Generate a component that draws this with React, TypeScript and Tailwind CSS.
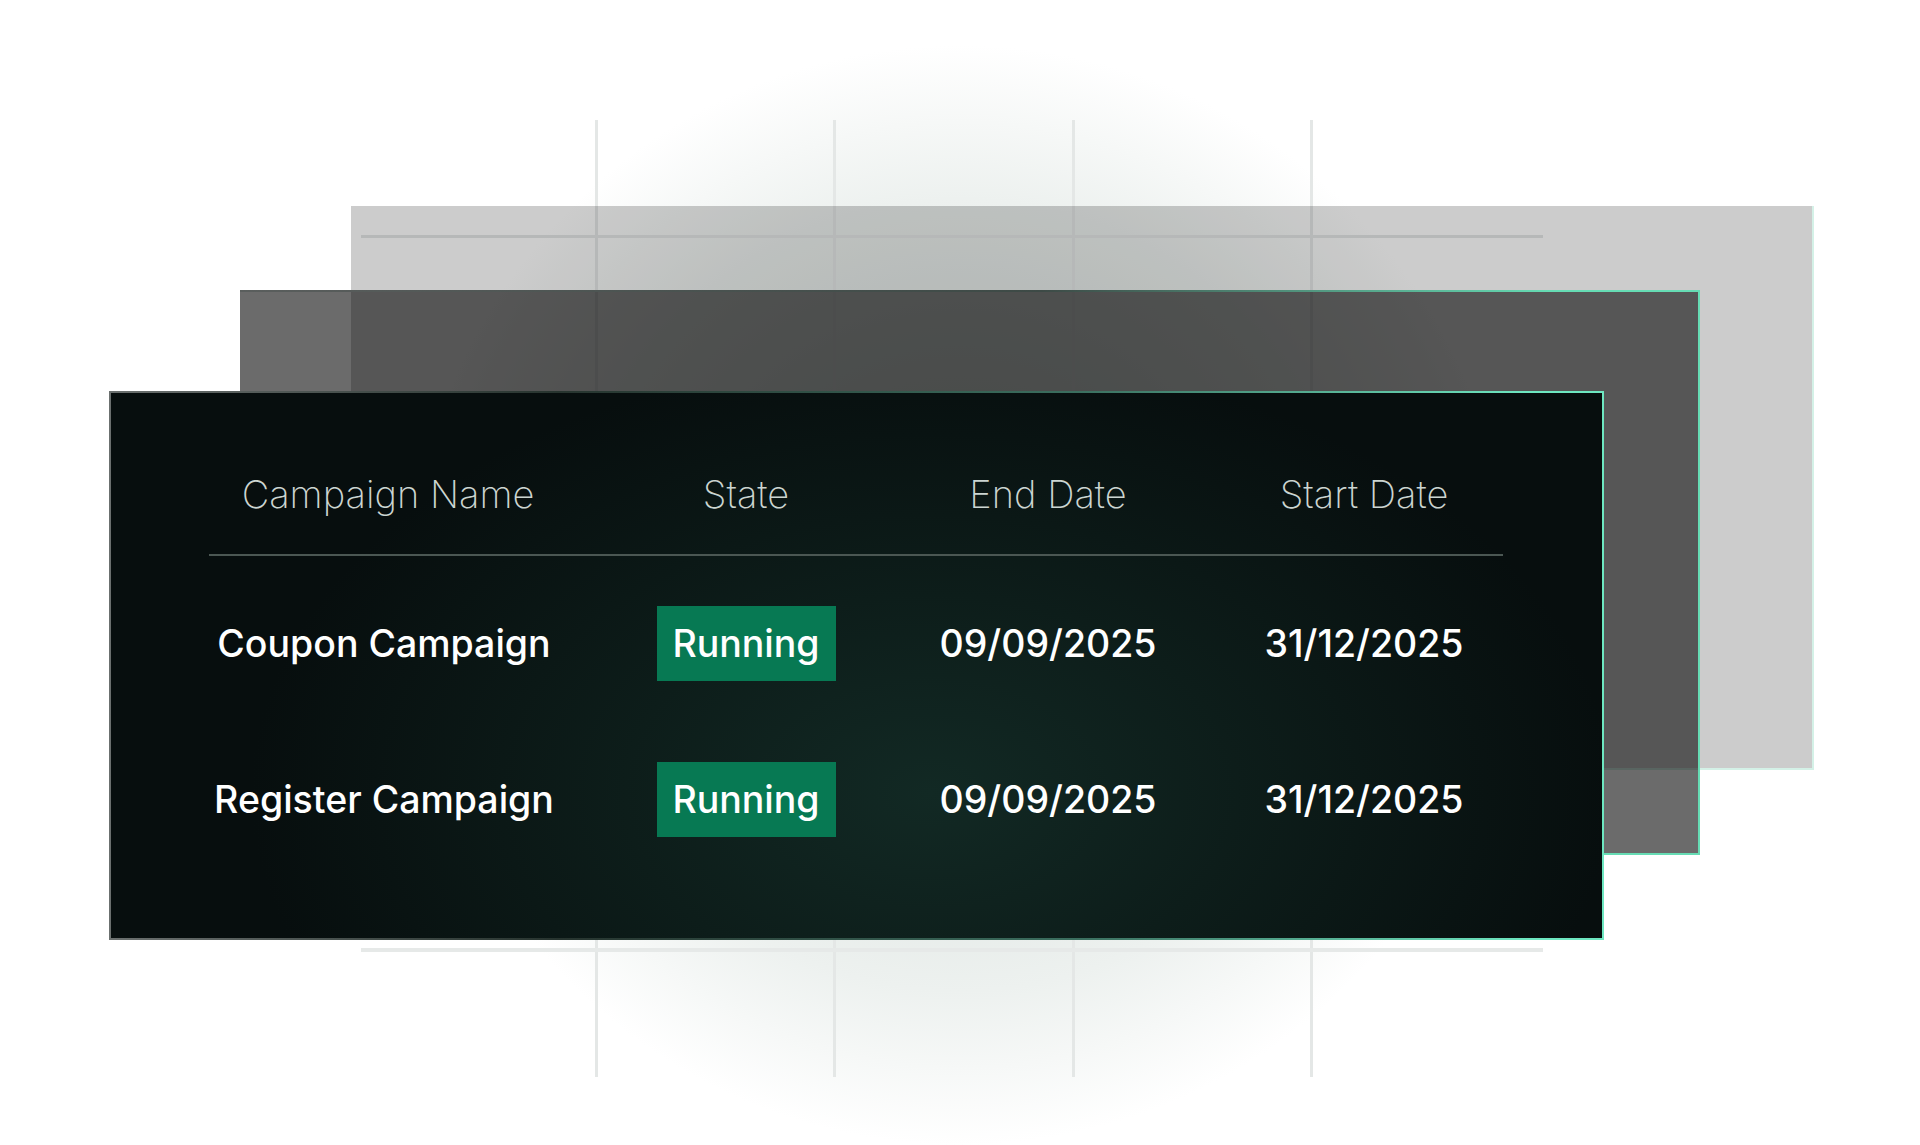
const COLS = "grid grid-cols-[350px_374px_230px_402px] items-center text-center";

const ROWS = [
  { name: "Coupon Campaign", state: "Running", end: "09/09/2025", start: "31/12/2025" },
  { name: "Register Campaign", state: "Running", end: "09/09/2025", start: "31/12/2025" },
];

function GridLines() {
  return (
    <>
      <div className="absolute left-[595px] top-[120px] h-[957px] w-[3px] bg-[#e4e7e6]" />
      <div className="absolute left-[833px] top-[120px] h-[957px] w-[3px] bg-[#e4e7e6]" />
      <div className="absolute left-[1072px] top-[120px] h-[957px] w-[3px] bg-[#e4e7e6]" />
      <div className="absolute left-[1310px] top-[120px] h-[957px] w-[3px] bg-[#e4e7e6]" />
      <div className="absolute left-[361px] top-[235px] h-[3px] w-[1182px] bg-[#e4e7e6]" />
      <div className="absolute left-[361px] top-[948px] h-[4px] w-[1182px] bg-[#e6e9e8]" />
    </>
  );
}

export default function App() {
  return (
    <div className="relative h-[1145px] w-[1920px] overflow-hidden bg-white font-['Inter','Noto_Sans',sans-serif]">
      {/* soft glow behind the stack */}
      <div className="absolute inset-0 bg-[radial-gradient(circle_550px_at_960px_595px,#d2dcd8_0%,#dfe6e3_40%,#edf1ef_72%,#ffffff_100%)]" />

      <GridLines />

      {/* back ghost card */}
      <div className="absolute left-[351px] top-[206px] h-[564px] w-[1463px] border-r-2 border-b-2 border-[#d4f1e7] bg-black/20" />

      {/* middle ghost card */}
      <div className="absolute left-[240px] top-[290px] h-[565px] w-[1460px] border-2 border-l-0 bg-black/[0.58] [border-image:linear-gradient(to_right,#5a5e5d,#3d4a46_55%,#66dcb4_90%)_1]" />

      {/* front table card */}
      <div className="absolute left-[109px] top-[391px] flex h-[549px] w-[1495px] flex-col border-2 bg-[radial-gradient(ellipse_680px_440px_at_820px_400px,#122924_0%,#0d1d1a_45%,#070e0e_100%)] pl-[98px] pt-[79px] [border-image:linear-gradient(to_right,#6b706f,#27342f_30%,#3b6f5f_65%,#6ee7c1_95%)_1]">
        <div className={`${COLS} h-[44px] text-[38px] font-extralight leading-[44px] text-[#ccd5d1]`}>
          <span className="pl-[8px]">Campaign Name</span>
          <span>State</span>
          <span>End Date</span>
          <span>Start Date</span>
        </div>

        <div className="mt-[38px] h-[2px] w-[1294px] bg-[#4b5753]" />

        {ROWS.map((row, i) => (
          <div
            key={row.name}
            className={`${COLS} h-[75px] text-[37.5px] font-medium leading-[44px] text-white ${i === 0 ? "mt-[50px]" : "mt-[81px]"}`}
          >
            <span>{row.name}</span>
            <span className="flex justify-center">
              <span className="flex h-[75px] w-[179px] items-center justify-center bg-[#077953]">{row.state}</span>
            </span>
            <span>{row.end}</span>
            <span>{row.start}</span>
          </div>
        ))}
      </div>
    </div>
  );
}
